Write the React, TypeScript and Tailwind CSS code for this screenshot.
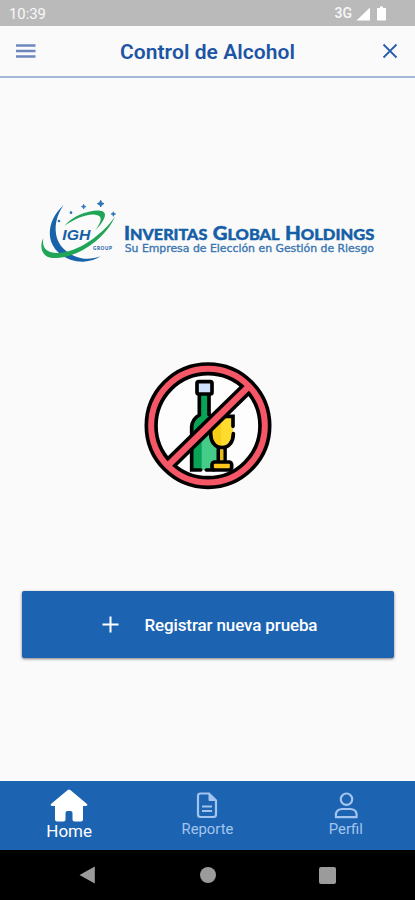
function StatusBar() {
  return (
    <div className="flex h-[26px] items-center justify-between bg-[#bababa] pr-[29px] pl-[9px] text-white/90">
      <span className="pt-[2px] text-[14.8px]">10:39</span>
      <div className="flex items-center pt-px">
        <span className="text-[14px] font-medium">3G</span>
        <svg className="ml-[4px] h-[14px] w-[14px]" viewBox="0 0 14 14" fill="white">
          <path d="M14 0.5V13.5H0.5Z" />
        </svg>
        <svg className="ml-[7px] h-[15px] w-[9px]" viewBox="0 0 9 15" fill="white">
          <path d="M3 0.5h3V2h2.2q.8 0 .8.8V13.7q0 .8-.8.8H.8q-.8 0-.8-.8V2.8Q0 2 .8 2H3Z" />
        </svg>
      </div>
    </div>
  );
}

function Header() {
  return (
    <header className="flex h-[52px] items-center justify-between border-b-2 border-[#a3b8d8] px-4">
      <svg className="h-4 w-5" viewBox="0 0 20 16" stroke="#6d88bd" strokeWidth="2.3">
        <path d="M0 2.5H19.5M0 8H19.5M0 13.5H19.5" />
      </svg>
      <h1 className="pt-[3px] pr-[3px] text-[21px] font-semibold tracking-[0.06px] text-[#1d55a5]">
        Control de Alcohol
      </h1>
      <svg className="mr-px h-4 w-4" viewBox="0 0 16 16" stroke="#2a5dab" strokeWidth="1.8">
        <path d="M1.5 1.5L14.5 14.5M14.5 1.5L1.5 14.5" />
      </svg>
    </header>
  );
}

function Logo() {
  return (
    <svg className="h-[80px] w-[345px]" viewBox="0 0 1035 240">
      <path
        d="M86 46C52 75 38 117 47 150C59 191 101 216 145 215C165 214 184 208 197 199C170 209 141 209 116 197C82 182 63 154 62 121C61 94 70 67 86 46Z"
        fill="#1762a8"
      />
      <path
        d="M88 108C111 80 158 60 195 62C218 64 216 85 180 122C202 91 204 77 180 74C151 72 118 88 88 108Z"
        fill="#20a557"
      />
      <path
        d="M25 143C12 171 20 201 52 204C115 209 206 156 241 79C201 136 128 188 68 189C33 189 20 173 25 143Z"
        fill="#20a557"
      />
      <g fill="#2c73b5">
        <path d="M197 31l3 7 7 3-7 3-3 7-3-7-7-3 7-3Z" stroke="#2c73b5" strokeWidth="3" />
        <path d="M146 43l2 5 5 2-5 2-2 5-2-5-5-2 5-2Z" stroke="#2c73b5" strokeWidth="2" />
        <path d="M235 65l2 5 5 2-5 2-2 5-2-5-5-2 5-2Z" stroke="#2c73b5" strokeWidth="2" />
        <circle cx="108" cy="68" r="4" />
        <circle cx="72" cy="93" r="4" />
      </g>
      <g fill="#155fa7" className="font-[Lato,sans-serif]">
        <text x="82" y="149" fontSize="43" fontWeight="700" fontStyle="italic" textLength="84" lengthAdjust="spacingAndGlyphs" className="font-['Liberation_Sans',sans-serif]">
          IGH
        </text>
        <text x="174" y="180" fontSize="14" fontWeight="900" textLength="57">
          GROUP
        </text>
        <g fontWeight="900" stroke="#155fa7" strokeWidth="1.3">
          <text x="267" y="151" fontSize="46" textLength="250" lengthAdjust="spacingAndGlyphs">
            <tspan fontSize="57">I</tspan>NVERITAS
          </text>
          <text x="533" y="151" fontSize="46" textLength="201" lengthAdjust="spacingAndGlyphs">
            <tspan fontSize="57">G</tspan>LOBAL
          </text>
          <text x="750" y="151" fontSize="46" textLength="268" lengthAdjust="spacingAndGlyphs">
            <tspan fontSize="57">H</tspan>OLDINGS
          </text>
        </g>
        <text
          x="269"
          y="185"
          fontSize="32"
          textLength="748"
          lengthAdjust="spacingAndGlyphs"
          stroke="#155fa7"
          strokeWidth="1"
          opacity="0.85"
          className="font-['DejaVu_Sans_Condensed','DejaVu_Sans',sans-serif]"
        >
          Su Empresa de Elección en Gestión de Riesgo
        </text>
      </g>
    </svg>
  );
}

function NoAlcoholIcon() {
  return (
    <svg className="h-[145px] w-[145px]" viewBox="0 0 435 435" fill="none">
      <circle cx="219" cy="212" r="160" fill="#fdfdfd" />
      <path d="M193 115H222V180Q242 193 246 215V345H170V215Q172 192 193 180Z" fill="#45cc88" />
      <path d="M193 115H222V180L200 240V345H170V215Q172 192 193 180Z" fill="#09a357" />
      <path d="M193 345H170V215Q172 192 193 180V118M222 118V178Q238 188 242 202M193 345H197M214 345H236" stroke="black" strokeWidth="11" strokeLinecap="round" />
      <rect x="186" y="80" width="45" height="37" rx="5" fill="#cfe2ff" stroke="black" strokeWidth="11" />
      <path d="M228 184H294V239Q292 275 261 278Q229 275 227 236Z" fill="#ffdb2d" />
      <path d="M228 184H258V278Q229 275 227 236Z" fill="#f8cd16" />
      <path d="M270 184H294V214M295 236C295 260 282 278 261 278C240 278 227 260 227 236V205" stroke="black" strokeWidth="11" strokeLinecap="round" />
      <path d="M250 279V322M270 279V322" stroke="black" strokeWidth="11" />
      <path d="M255 284H265V320H255Z" fill="#e9b910" />
      <rect x="231" y="321" width="59" height="24" rx="8" fill="#fcc719" stroke="black" strokeWidth="11" />
      <circle cx="219" cy="212" r="170.5" stroke="black" strokeWidth="40" />
      <path d="M100 330L340 96" stroke="black" strokeWidth="40" />
      <circle cx="219" cy="212" r="170.5" stroke="#f65766" strokeWidth="18" />
      <path d="M98 332L342 94" stroke="#f65766" strokeWidth="19" />
    </svg>
  );
}

function TabBar() {
  return (
    <nav className="grid h-[69px] grid-cols-3 bg-[#1c64b1] text-[14.8px] text-[#a3c4ee]">
      <div className="flex flex-col items-center pt-[7px] text-white">
        <svg className="h-[34px] w-[38px]" viewBox="0 0 38 34" fill="white">
          <path d="M17.7 2.1Q19 1 20.3 2.1L37 16Q38 17.8 36 18H33V31.5Q33 33.5 31 33.5H24.5Q22.5 33.5 22.5 31.5V25Q22.5 23 20.5 23H17.5Q15.5 23 15.5 25V31.5Q15.5 33.5 13.5 33.5H7Q5 33.5 5 31.5V18H2Q0 17.8 1 16Z" />
        </svg>
        <span className="text-[17px] leading-[18px]">Home</span>
      </div>
      <div className="flex flex-col items-center pt-[11px]">
        <svg className="h-[27px] w-[22px]" viewBox="0 0 22 27" fill="none" stroke="currentColor" strokeWidth="2.2">
          <path d="M13 1.5H4.5Q2 1.5 2 4V22.5Q2 25 4.5 25H17.5Q20 25 20 22.5V8.5Z" />
          <path d="M13 1.5V8.5H20Z" fill="currentColor" strokeWidth="1" />
          <path d="M6 14.5H16M6 19H16" />
        </svg>
        <span className="mt-px leading-[18px]">Reporte</span>
      </div>
      <div className="flex flex-col items-center pt-[11px]">
        <svg className="h-[27px] w-[24px]" viewBox="0 0 24 27" fill="none" stroke="currentColor" strokeWidth="2.2">
          <circle cx="12.5" cy="7.2" r="5.7" />
          <path d="M2 25.2Q1 17 8 17H16.5Q23.5 17 22.5 25.2Z" />
        </svg>
        <span className="mt-px leading-[18px]">Perfil</span>
      </div>
    </nav>
  );
}

function SystemNav() {
  return (
    <div className="flex h-[50px] items-center justify-between bg-black px-[79px]">
      <svg className="h-[18px] w-[17px]" viewBox="0 0 17 18" fill="#9b9b9b">
        <path d="M15.8 .5V17.5L.5 9Z" />
      </svg>
      <div className="size-4 rounded-full bg-[#9b9b9b]" />
      <div className="size-[17px] rounded-[2px] bg-[#9b9b9b]" />
    </div>
  );
}

export default function App() {
  return (
    <div className="flex h-[900px] w-[415px] flex-col bg-[#fafafa] font-[Roboto,sans-serif]">
      <StatusBar />
      <Header />
      <main className="flex flex-1 flex-col">
        <div className="mt-[112px] ml-[35px]">
          <Logo />
        </div>
        <div className="mt-[85px] ml-[135px]">
          <NoAlcoholIcon />
        </div>
        <button className="mx-auto mt-[91px] flex h-[67px] w-[372px] items-center rounded-[2px] bg-[#1c64b1] pl-[80px] text-[17px] text-white shadow-[0_1px_3px_rgba(0,0,0,0.5)]">
          <svg className="h-[17px] w-[17px]" viewBox="0 0 17 17" stroke="white" strokeWidth="2">
            <path d="M8.5 .5V16.5M.5 8.5H16.5" />
          </svg>
          <span className="ml-[26px] pt-[2px] font-medium tracking-[-0.13px]">Registrar nueva prueba</span>
        </button>
      </main>
      <TabBar />
      <SystemNav />
    </div>
  );
}
